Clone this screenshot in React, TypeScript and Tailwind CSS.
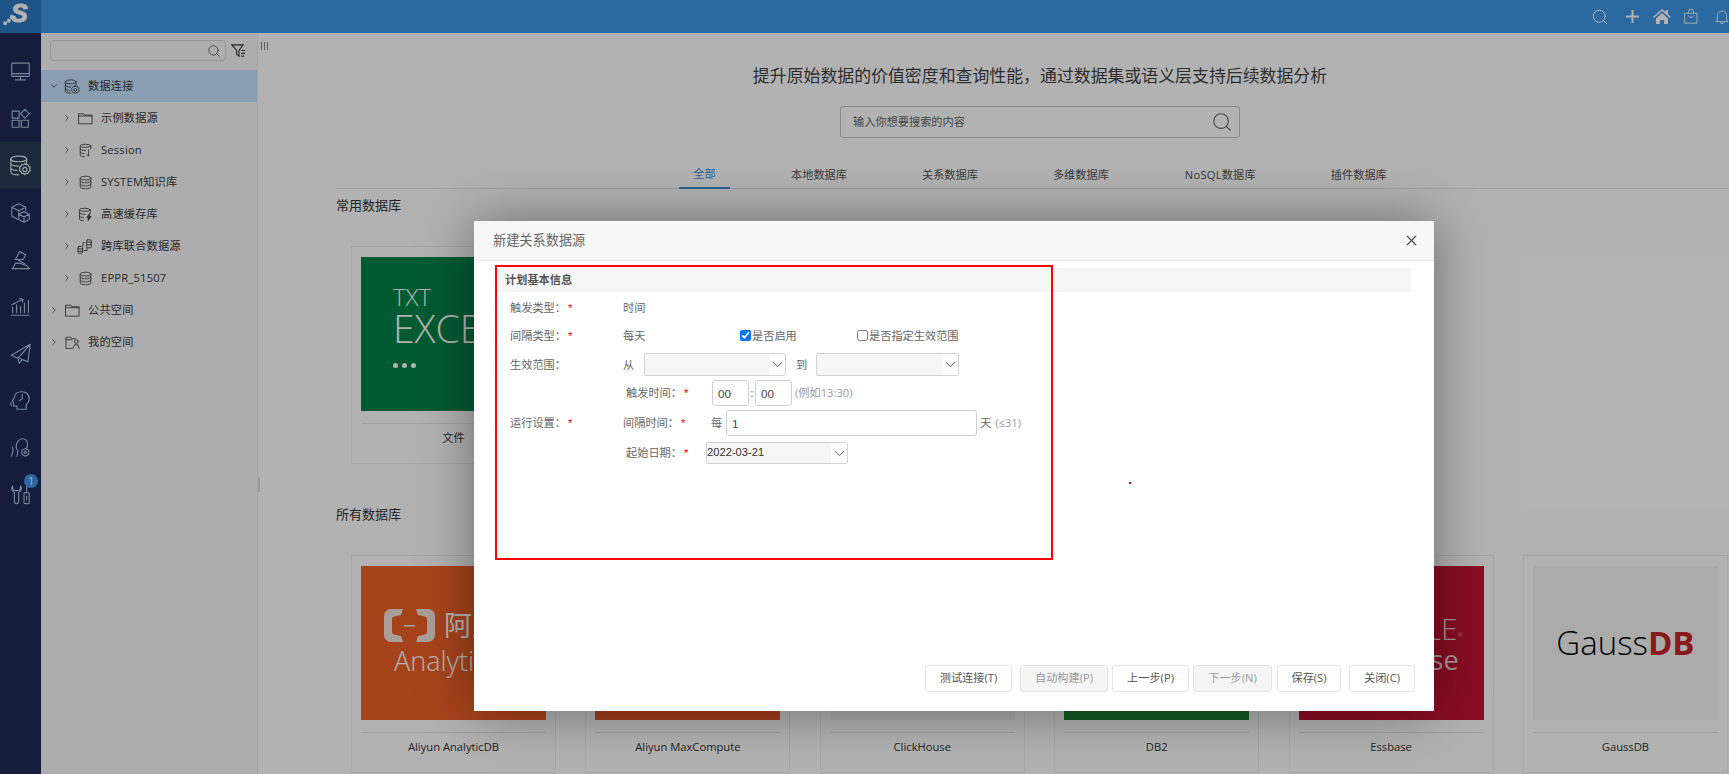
import React from "react";
import { ChevronDown, ChevronRight, Search, X } from "lucide-react";

const S = ({ children, className = "w-5 h-5" }: { children: React.ReactNode; className?: string }) => (
  <svg viewBox="0 0 24 24" fill="none" stroke="currentColor" strokeWidth={1.3} strokeLinejoin="round" strokeLinecap="round" className={className}>
    {children}
  </svg>
);

const navIcons: React.ReactNode[] = [
  <><rect x="2" y="2.5" width="20" height="15" rx="0.8" /><path d="M2 14.5h20M12 17.5v4M6 21.5h12" /></>,
  <><rect x="2.5" y="3.5" width="8" height="8" /><rect x="2.5" y="14" width="8" height="8" /><rect x="13" y="14" width="8" height="8" /><path d="M17 1.5l5 5-5 5-5-5z" /></>,
  <><ellipse cx="10" cy="4.500" rx="9" ry="3.200" /><path d="M1 4.500v15c0 1.800 4 3.200 9 3.200M19 4.500v5M1 9.500c0 1.800 4 3.200 9 3.200M1 14.500c0 1.600 3 2.900 7 3.100" /><path d="M17 9.500l1.300 1.700 2.200-.3.900 2 1.800 1.100-.7 2 .7 2-1.800 1.100-.9 2-2.200-.3-1.300 1.700-1.300-1.700-2.200.3-.9-2-1.800-1.100.7-2-.7-2 1.800-1.100.9-2 2.200.3z" /><circle cx="17" cy="16.500" r="2.400" /></>,
  <><path d="M10 2l8 4v3.5M10 2L2 6v10l7 4M2 6l8 4v5M10 10l6-3" /><path d="M16 11l6 3v6l-6 3-6-3v-6zM10 14l6 3 6-3M16 17v6" /></>,
  <><path d="M2 22.5h20.5M3 22.5l3-6h6l7 2.5 3 3.5" /><path d="M6 12L11 3l7 3.5-3 5.5zM9.5 13l7 3.5" /></>,
  <><path d="M2 22h20M3 13v6M7.5 10v9M12 12v7M16.5 8v11M21 5v14M2 10L14 4M11 3l4 1-1 3" /></>,
  <><path d="M23 1.5L1.5 14l7.5 3.5 1.5 5.5 3.5-4 6.5 2.5zM9 17.5L23 1.5M14 19l-3.5-2" /></>,
  <><path d="M8 22V18.500H5a1 1 0 01-1-1V14l-1.500-1L5 8.500C5.500 4.500 9 2 13.500 2 18.500 2 22 5.500 22 10c0 3-1.500 5-3.500 6.500V22z" /><path d="M14 5v5l-3 2" /><path d="M1 14.500c-.5 1-.5 2 .5 3.500" /></>,
  <><path d="M2 22c0-3 1.500-4.500 1.500-7 0-1.500-1-2-1-3.500M8 22c0-2 1-3.500 1-5.500 0-2-2-3-2-5C7 6 10.500 2 14 2s6 2.500 6 6.500c0 1.500-.5 3-1 4" /><path d="M17.500 13l3.800 2.200v4.600L17.500 22l-3.800-2.200v-4.600z" /><circle cx="17.500" cy="17.500" r="1.300" /></>,
  <><path d="M3 2C1 5 2 8 5 9.500V20a2.500 2.500 0 005 0V9.500C13 8 14 5 12 2v4L9.500 7.500h-4L3 6z" /><rect x="16" y="10" width="6" height="12.500" rx="1" /><path d="M19 2v8M19 14v4" /></>,
];

const Folder = () => (
  <S className="w-[15px] h-[15px]"><path d="M1.500 4.500h8l1.500 2h11.500v14h-21z" /><path d="M1.500 8h21" /></S>
);
const Db = () => (
  <S className="w-[15px] h-[15px]"><ellipse cx="12" cy="5" rx="8.500" ry="3" /><path d="M3.500 5v14c0 1.700 3.800 3 8.500 3s8.500-1.300 8.500-3V5M3.500 9.500c0 1.700 3.800 3 8.500 3s8.500-1.300 8.500-3M3.500 14.500c0 1.700 3.800 3 8.500 3s8.500-1.300 8.500-3" /></S>
);

const treeRows: { t: string; lv: 1 | 2; icon: React.ReactNode; open?: boolean }[] = [
  { t: "数据连接", lv: 1, open: true, icon: <S className="w-[17px] h-[17px]"><ellipse cx="10" cy="5" rx="8" ry="3" /><path d="M2 5v14c0 1.700 3.500 3 8 3M18 5v5M2 10c0 1.600 3.500 3 8 3M2 15c0 1.400 2.500 2.600 6 2.900" /><path d="M17 10.500l1.200 1.600 2-.3.800 1.900 1.700 1-.6 1.900.6 1.900-1.700 1-.8 1.900-2-.3-1.200 1.600-1.200-1.600-2 .3-.8-1.900-1.700-1 .6-1.900-.6-1.900 1.700-1 .8-1.900 2 .3z" /><circle cx="17" cy="17" r="2" /></S> },
  { t: "示例数据源", lv: 2, icon: <Folder /> },
  { t: "Session", lv: 2, icon: <S className="w-[15px] h-[15px]"><ellipse cx="12" cy="4.500" rx="8.500" ry="2.500" /><path d="M3.500 4.500v15c0 1.500 3 2.500 6.500 2.500M20.500 4.500v5M3.500 9.500c0 1.400 3.800 2.500 8.500 2.500M3.500 14.500c0 1.400 3 2.500 6.500 2.500M17 11v10l-3-2" /></S> },
  { t: "SYSTEM知识库", lv: 2, icon: <Db /> },
  { t: "高速缓存库", lv: 2, icon: <S className="w-[15px] h-[15px]"><ellipse cx="11" cy="4.500" rx="8.500" ry="2.500" /><path d="M2.500 4.500v15c0 1.500 3 2.500 6.500 2.500M19.500 4.500v6M2.500 9.500c0 1.400 3.800 2.500 8.500 2.500M2.500 14.500c0 1.400 3 2.500 6.500 2.500" /><path d="M18 11l-4 6h3l-1 5 5-7h-3z" fill="currentColor" /></S> },
  { t: "跨库联合数据源", lv: 2, icon: <S className="w-[17px] h-[17px]"><rect x="1.500" y="12" width="7" height="10" rx="1.500" /><path d="M1.500 15.500h7M1.500 19h7" /><rect x="14.500" y="2" width="7" height="12" rx="1.500" /><path d="M14.500 5.500h7M14.500 9.500h7M11 18h4v-4M11 6H9v5" /></S> },
  { t: "EPPR_51507", lv: 2, icon: <Db /> },
  { t: "公共空间", lv: 1, icon: <S className="w-[15px] h-[15px]"><path d="M1.500 3.500h8l1.500 2.500h11.500v15h-21z" /><path d="M1.500 7.500h21" /></S> },
  { t: "我的空间", lv: 1, icon: <S className="w-[15px] h-[15px]"><path d="M11 21.500H1.500v-18h8L11 6h5M1.500 7.500H11" /><circle cx="18" cy="10.500" r="3" /><path d="M12.500 21.500l3-6h5l2 6" /></S> },
];

function Card({ label, children, cls }: { label: string; children?: React.ReactNode; cls: string }) {
  return (
    <div className="border border-[#ececec] px-[9px] pt-[10px] h-[218px] flex flex-col">
      <div className={`h-[154px] shrink-0 overflow-hidden ${cls}`}>{children}</div>
      <div className="mt-[12px] border-t border-[#e6e6e6] h-[30px] flex items-center justify-center text-[11.2px] text-[#333]">{label}</div>
    </div>
  );
}

function Req() {
  return <span className="text-[#f00] ml-[2px] font-['Liberation_Sans',sans-serif] text-[11.2px]">*</span>;
}

function Sel({ w, value, h = "h-[23px]" }: { w: string; value?: string; h?: string }) {
  return (
    <div className={`${w} ${h} flex border border-[#d2d2d2] rounded-[2px] overflow-hidden`}>
      <div className="flex-1 bg-[#f6f6f6] flex items-center text-[11.2px] text-[#333] font-['Liberation_Sans',sans-serif]">{value}</div>
      <div className="w-[16px] bg-white flex items-center justify-center text-[#555]">
        <ChevronDown size={17} strokeWidth={1.4} className="shrink-0" />
      </div>
    </div>
  );
}

function Inp({ w, value }: { w: string; value: string }) {
  return (
    <input
      readOnly
      value={value}
      className={`${w} h-[26px] border border-[#cfcfcf] rounded-[3px] px-[5px] text-[11.7px] text-[#444] outline-none font-['Liberation_Sans',sans-serif]`}
    />
  );
}

function Btn({ t, w, ml, off }: { t: string; w: string; ml: string; off?: boolean }) {
  return (
    <div className={`${w} ${ml} h-[27px] border border-[#e4e4e4] rounded-[3px] flex items-center justify-center text-[11.2px] ${off ? "bg-[#f5f5f5] text-[#999]" : "bg-white text-[#555]"}`}>
      {t}
    </div>
  );
}

export default function App() {
  return (
    <div className="relative h-screen w-full overflow-hidden bg-white flex flex-col font-['Open_Sans','Noto_Sans_CJK_SC',sans-serif]">
      {/* top bar */}
      <div className="h-[33px] shrink-0 bg-[#3d97e9] flex text-white">
        <div className="w-[41px] bg-[#2c78c2] flex items-center justify-center">
          <svg viewBox="0 0 41 33" className="w-[41px] h-[33px]">
            <text x="11" y="22" fontFamily="'Liberation Sans',sans-serif" fontWeight="700" fontStyle="italic" fontSize="25" fill="#fff" stroke="#fff" strokeWidth="1">S</text>
            <rect x="10" y="15" width="4" height="4" fill="#fff" transform="rotate(20 12 17)" />
            <rect x="7" y="19" width="3.500" height="3.500" fill="#fff" transform="rotate(20 9 21)" />
            <rect x="3.500" y="21.500" width="3.500" height="3.500" fill="#fff" transform="rotate(20 5 23)" />
          </svg>
        </div>
        <div className="flex-1 flex items-center justify-end -mr-[1px] overflow-hidden">
          <Search size={18} strokeWidth={1.3} />
          <svg viewBox="0 0 13 13" className="ml-[17px] w-[13px] h-[13px]" fill="currentColor"><path d="M5.500 0h2v5.500H13v2H7.500V13h-2V7.500H0v-2h5.500z" /></svg>
          <svg viewBox="0 0 18 15" className="ml-[14px] w-[18px] h-[15px]" fill="currentColor"><path d="M9 0l3.500 3V1h2.500v4.200L18 8l-1 1-8-7-8 7-1-1zM3 9.500L9 4l6 5.500V15h-4v-4H7v4H3z" /></svg>
          <S className="ml-[12px] w-[16px] h-[17px]"><path d="M3 7h18v15H3z" /><path d="M8 7V5a4 4 0 018 0v2M8 11c.5 3 7.500 3 8 0" /></S>
          <S className="ml-[15px] w-[16px] h-[18px]"><path d="M5 17V10a7 7 0 0114 0v7l2 2H3zM9.500 19.500a2.500 2.500 0 005 0" /></S>
        </div>
      </div>

      <div className="flex-1 flex min-h-0">
        {/* nav */}
        <div className="w-[41px] shrink-0 bg-[#1f2957] flex flex-col pt-[15px] text-[#a9c0d8]">
          {navIcons.map((ic, i) => (
            <div key={i} className={`relative h-[47px] shrink-0 flex items-center justify-center ${i === 2 ? "bg-[#283c54] text-[#e6ebf1]" : ""}`}>
              {ic && <S className="w-[21px] h-[21px]">{ic}</S>}
              {i === 9 && (
                <span className="absolute left-[24px] top-[3px] w-[14px] h-[14px] rounded-full bg-[#3d97e9] text-white text-[10px] leading-[14px] text-center">1</span>
              )}
            </div>
          ))}
        </div>

        {/* tree */}
        <div className="w-[217px] shrink-0 bg-[#f8f8f9] border-r border-[#ededed] relative">
          <div className="h-[37px] pt-[7px] pl-[9px] flex items-start">
            <div className="w-[176px] h-[21px] border border-[#d8d8d8] rounded-[4px] bg-[#f8f8f9] flex items-center justify-end pr-[4px] text-[#555]">
              <Search size={14} strokeWidth={1.4} />
            </div>
            <svg viewBox="0 0 16 16" className="ml-[5px] mt-[3px] w-[15px] h-[15px] text-[#333]" fill="none" stroke="currentColor" strokeWidth="1.200"><path d="M1 2h12L8.500 8v6L6 12V8zM11 8h4M11 11h4M11 14h3" /></svg>
          </div>
          {treeRows.map((r) => (
            <div key={r.t} className={`h-[32px] flex items-center text-[11.2px] text-[#3a3a3a] ${r.lv === 1 ? "pl-[5px]" : "pl-[18px]"} ${r.open ? "bg-[#c5e2ff]" : ""}`}>
              <span className="w-[16px] flex justify-center">
                {r.open ? <ChevronDown size={10} strokeWidth={1.8} /> : <ChevronRight size={10} strokeWidth={1.8} />}
              </span>
              <span className="w-[16px] ml-[2px] flex justify-center">{r.icon}</span>
              <span className="ml-[8px] tracking-[0.2px]">{r.t}</span>
            </div>
          ))}
          <div className="absolute -right-[3px] top-[444px] w-[2px] h-[15px] bg-[#dcdcdc]" />
        </div>

        {/* main */}
        <div className="relative flex-1 min-w-0 overflow-hidden pl-[78px]">
          <svg viewBox="0 0 8 8" className="absolute left-[3px] top-[9px] w-[8px] h-[8px] text-[#888]" fill="currentColor"><path d="M0 0h1v8H0zM3 0h1v8H3zM6 0h1v8H6z" /></svg>
          <div className="w-[1408px]">
            <div className="pt-[31px] h-[55px] text-center text-[16.9px] leading-[24px] text-[#444]">提升原始数据的价值密度和查询性能，通过数据集或语义层支持后续数据分析</div>
            <div className="mt-[18px] mx-auto w-[400px] h-[32px] border border-[#c4c4c4] rounded-[3px] flex items-center justify-between pl-[12px] pr-[6px]">
              <span className="text-[11.2px] text-[#666]">输入你想要搜索的内容</span>
              <Search size={22} strokeWidth={1.2} className="text-[#666]" />
            </div>
            <div className="mt-[24px] h-[27px] border-b border-[#e2e2e2] flex items-stretch text-[11.2px] text-[#555]">
              <div className="ml-[343px] w-[51px] flex items-center justify-center text-[#3d8fd8] border-b-2 border-[#3d8fd8] h-[27px]">全部</div>
              <div className="ml-[61px] flex items-center">本地数据库</div>
              <div className="ml-[75px] flex items-center">关系数据库</div>
              <div className="ml-[75px] flex items-center">多维数据库</div>
              <div className="ml-[76px] flex items-center tracking-[0.2px]">NoSQL数据库</div>
              <div className="ml-[75px] flex items-center">插件数据库</div>
            </div>
            <div className="mt-[7px] h-[20px] flex items-center text-[13px] text-[#333]">常用数据库</div>
            <div className="mt-[30px] ml-[15px] grid grid-cols-[repeat(6,205px)] gap-x-[29.4px]">
              <Card label="文件" cls="bg-[#008349] pl-[32px] pt-[29px] text-white font-light">
                <div className="text-[24px] leading-[22px]">TXT</div>
                <div className="text-[39px] leading-[39px]">EXCEL</div>
                <div className="mt-[16px] flex gap-[4px]">
                  <span className="w-[5px] h-[5px] rounded-full bg-white" />
                  <span className="w-[5px] h-[5px] rounded-full bg-white" />
                  <span className="w-[5px] h-[5px] rounded-full bg-white" />
                </div>
              </Card>
            </div>
            <div className="mt-[41px] h-[20px] flex items-center text-[13px] text-[#333]">所有数据库</div>
            <div className="mt-[30px] ml-[15px] grid grid-cols-[repeat(6,205px)] gap-x-[29.4px]">
              <Card label="Aliyun AnalyticDB" cls="bg-[#f06127] pt-[43px] text-white">
                <div className="pl-[23px] flex items-center">
                  <svg viewBox="0 0 51 33" className="w-[51px] h-[33px]" fill="#f4e2da">
                    <path d="M19 0H7a7 7 0 00-7 7v19a7 7 0 007 7h12l-2-6-7-1.500c-1.500-.5-2-1.200-2-2.500V10c0-1.300.5-2 2-2.500L17 6zM32 0h12a7 7 0 017 7v19a7 7 0 01-7 7H32l2-6 7-1.500c1.500-.5 2-1.200 2-2.500V10c0-1.300-.5-2-2-2.500L34 6zM20 16h11v1.500H20z" />
                  </svg>
                  <span className="ml-[9px] text-[28px] leading-[33px]">阿里云</span>
                </div>
                <div className="pl-[33px] mt-[1px] text-[27px] leading-[36px] font-light">AnalyticDB</div>
              </Card>
              <Card label="Aliyun MaxCompute" cls="bg-[#e8592a]" />
              <Card label="ClickHouse" cls="bg-[#f4f4f4]" />
              <Card label="DB2" cls="bg-[#1e822e]" />
              <Card label="Essbase" cls="bg-[#c51431] flex flex-col items-end pt-[46px] pr-[21px] text-[#f0d5da] font-light">
                <div className="text-[30px] leading-[34px]">ORACLE<sup className="text-[6px]">®</sup></div>
                <div className="text-[27px] leading-[28px] mr-[4px] font-normal">Essbase</div>
              </Card>
              <Card label="GaussDB" cls="bg-[#f5f5f5] flex items-center justify-center text-[33px]">
                <span className="font-light text-black">Gauss</span>
                <span className="font-bold text-[#c8232a]">DB</span>
              </Card>
            </div>
          </div>
        </div>
      </div>

      {/* dim */}
      <div className="absolute inset-0 bg-black/30" />

      {/* modal */}
      <div className="absolute left-[474px] top-[221px] w-[960px] h-[490px] bg-white flex flex-col shadow-[0_0_50px_rgba(0,0,0,0.4)]">
        <div className="h-[40px] shrink-0 bg-[#f7f7f7] border-b border-[#e8e8e8] flex items-center justify-between pl-[19px] pr-[14px] text-[13.2px] text-[#666]">
          <span>新建关系数据源</span>
          <X size={17} strokeWidth={1.6} className="text-[#444]" />
        </div>
        <div className="flex-1 min-h-0 text-[11.2px] text-[#666] leading-none">
          <div className="mt-[7px] ml-[22px] mr-[23px] h-[24px] bg-[#f6f6f6] flex items-center pl-[9px] font-bold text-[#555]">计划基本信息</div>
          <div className="mt-[2px] pl-[36px]">
            <div className="h-[28px] flex items-center">
              <div className="w-[113px]">触发类型：<Req /></div>
              <div>时间</div>
            </div>
            <div className="h-[28px] flex items-center">
              <div className="w-[113px]">间隔类型：<Req /></div>
              <div className="w-[117px]">每天</div>
              <label className="w-[117px] flex items-center gap-[1px]">
                <input type="checkbox" readOnly checked className="w-[11px] h-[11px] m-0 accent-[#0075ff]" />是否启用
              </label>
              <label className="flex items-center gap-[1px]">
                <input type="checkbox" readOnly className="w-[11px] h-[11px] m-0" />是否指定生效范围
              </label>
            </div>
            <div className="h-[29px] flex items-center">
              <div className="w-[113px]">生效范围：</div>
              <div className="w-[21px]">从</div>
              <Sel w="w-[142px]" />
              <div className="w-[30px] pl-[10px]">到</div>
              <Sel w="w-[143px]" />
            </div>
            <div className="h-[28px] flex items-center">
              <div className="ml-[116px] w-[86px]">触发时间：<Req /></div>
              <Inp w="w-[37px]" value="00" />
              <div className="w-[6px] text-center">:</div>
              <Inp w="w-[37px]" value="00" />
              <div className="ml-[3px] text-[#999]">(例如13:30)</div>
            </div>
            <div className="h-[32px] flex items-center">
              <div className="w-[113px]">运行设置：<Req /></div>
              <div className="w-[88px]">间隔时间：<Req /></div>
              <div className="w-[15px]">每</div>
              <Inp w="w-[251px]" value="1" />
              <div className="ml-[3px]">天</div>
              <div className="ml-[4px] text-[#999]">(≤31)</div>
            </div>
            <div className="h-[28px] flex items-center">
              <div className="ml-[116px] w-[80px]">起始日期：<Req /></div>
              <Sel w="w-[142px]" h="h-[22px]" value="2022-03-21" />
            </div>
          </div>
        </div>
        <div className="flex justify-end pr-[19px] pb-[19px]">
          <Btn t="测试连接(T)" w="w-[87px]" ml="" />
          <Btn t="自动构建(P)" w="w-[88px]" ml="ml-[8px]" off />
          <Btn t="上一步(P)" w="w-[77px]" ml="ml-[4px]" />
          <Btn t="下一步(N)" w="w-[79px]" ml="ml-[4px]" off />
          <Btn t="保存(S)" w="w-[64px]" ml="ml-[5px]" />
          <Btn t="关闭(C)" w="w-[66px]" ml="ml-[8px]" />
        </div>
        <div className="absolute left-[21px] top-[44px] w-[558px] h-[295px] border-2 border-[#f00]" />
        <div className="absolute left-[655px] top-[261px] w-[2px] h-[2px] bg-[#f00]" />
      </div>
    </div>
  );
}
